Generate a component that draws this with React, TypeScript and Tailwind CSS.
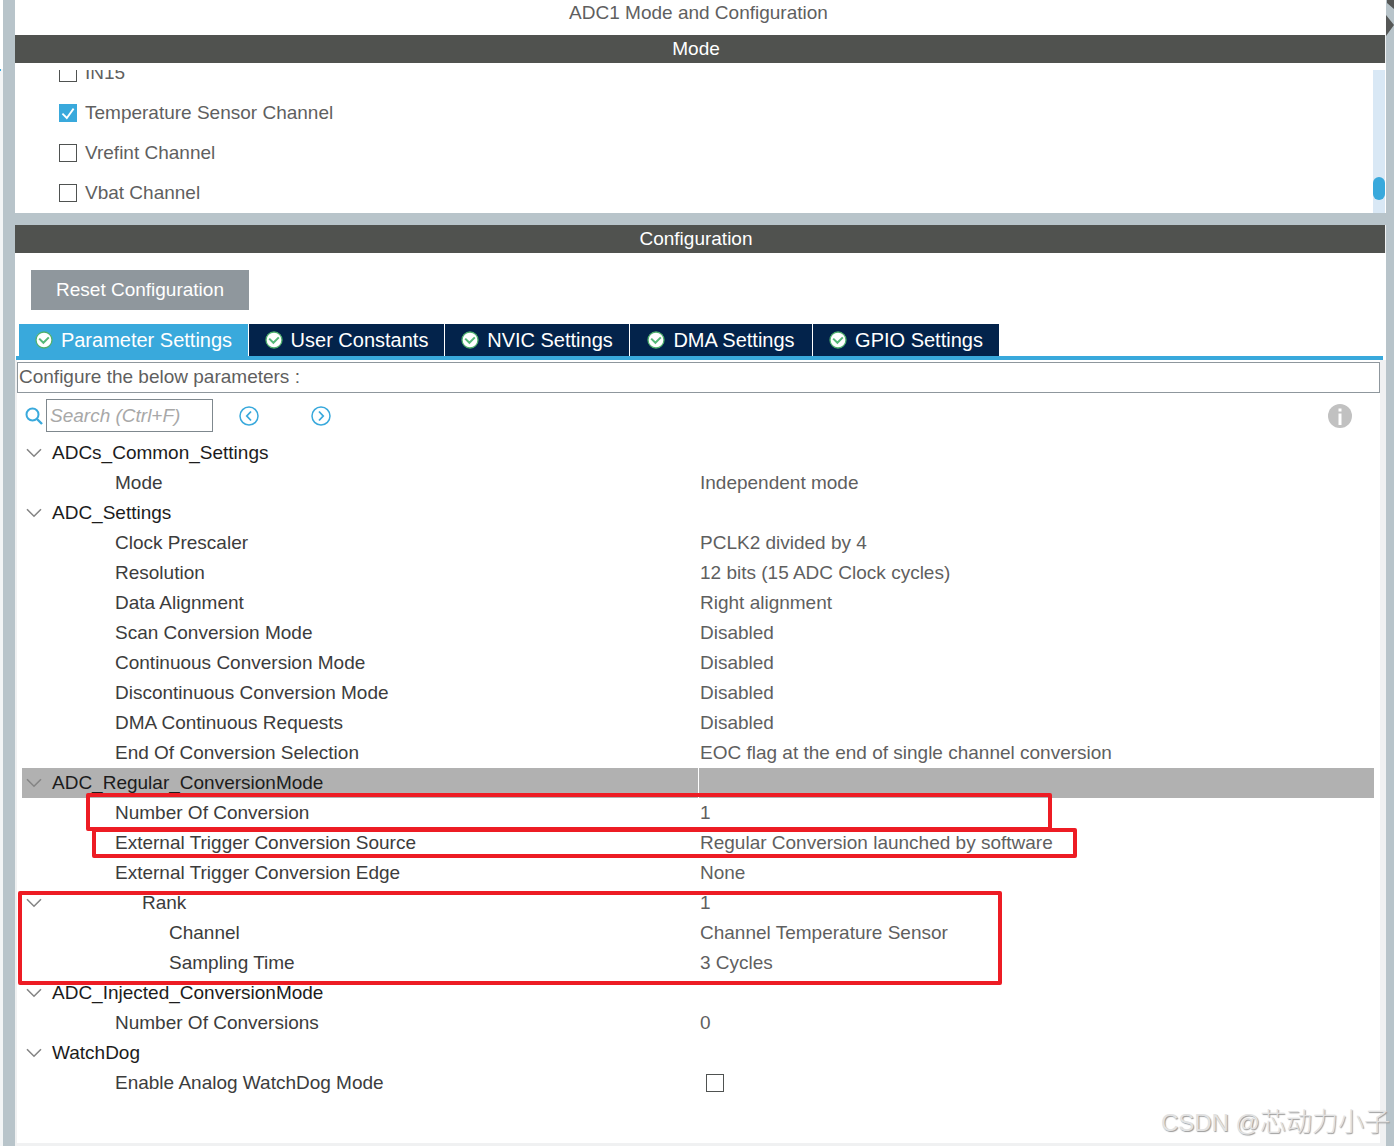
import { useState } from 'react';
import clsx from 'clsx';

interface Row {
  id: string;
  label: string;
  value?: string;
  kind: 'group' | 'param' | 'rank' | 'sub' | 'check';
}

const channels = ['IN15', 'Temperature Sensor Channel', 'Vrefint Channel', 'Vbat Channel'];

const tabs = [
  { label: 'Parameter Settings', width: 'w-[229px]' },
  { label: 'User Constants', width: 'w-[195px]' },
  { label: 'NVIC Settings', width: 'w-[184px]' },
  { label: 'DMA Settings', width: 'w-[182px]' },
  { label: 'GPIO Settings', width: 'w-[186px]' },
];

const rows: Row[] = [
  { id: 'common', label: 'ADCs_Common_Settings', kind: 'group' },
  { id: 'mode', label: 'Mode', value: 'Independent mode', kind: 'param' },
  { id: 'settings', label: 'ADC_Settings', kind: 'group' },
  { id: 'prescaler', label: 'Clock Prescaler', value: 'PCLK2 divided by 4', kind: 'param' },
  { id: 'resolution', label: 'Resolution', value: '12 bits (15 ADC Clock cycles)', kind: 'param' },
  { id: 'align', label: 'Data Alignment', value: 'Right alignment', kind: 'param' },
  { id: 'scan', label: 'Scan Conversion Mode', value: 'Disabled', kind: 'param' },
  { id: 'continuous', label: 'Continuous Conversion Mode', value: 'Disabled', kind: 'param' },
  { id: 'discontinuous', label: 'Discontinuous Conversion Mode', value: 'Disabled', kind: 'param' },
  { id: 'dma', label: 'DMA Continuous Requests', value: 'Disabled', kind: 'param' },
  { id: 'eoc', label: 'End Of Conversion Selection', value: 'EOC flag at the end of single channel conversion', kind: 'param' },
  { id: 'regular', label: 'ADC_Regular_ConversionMode', kind: 'group' },
  { id: 'count', label: 'Number Of Conversion', value: '1', kind: 'param' },
  { id: 'source', label: 'External Trigger Conversion Source', value: 'Regular Conversion launched by software', kind: 'param' },
  { id: 'edge', label: 'External Trigger Conversion Edge', value: 'None', kind: 'param' },
  { id: 'rank', label: 'Rank', value: '1', kind: 'rank' },
  { id: 'channel', label: 'Channel', value: 'Channel Temperature Sensor', kind: 'sub' },
  { id: 'sampling', label: 'Sampling Time', value: '3 Cycles', kind: 'sub' },
  { id: 'injected', label: 'ADC_Injected_ConversionMode', kind: 'group' },
  { id: 'injectedCount', label: 'Number Of Conversions', value: '0', kind: 'param' },
  { id: 'watchdog', label: 'WatchDog', kind: 'group' },
  { id: 'analogWatchdog', label: 'Enable Analog WatchDog Mode', kind: 'check' },
];

const Checkbox = ({ id, checked, onChange }: { id: string; checked: boolean; onChange: () => void }) => (
  <span className="relative block h-[18px] w-[18px] shrink-0">
    <input
      id={id}
      type="checkbox"
      checked={checked}
      onChange={onChange}
      className="block h-[18px] w-[18px] appearance-none border border-[#4f5251] bg-white checked:border-[#39a9dc] checked:bg-[#39a9dc]"
    />
    {checked && (
      <svg viewBox="0 0 18 18" className="pointer-events-none absolute inset-0" fill="none" stroke="white" strokeWidth="1.8">
        <path d="M3.4 9.6 7.8 14 14.6 4.6" />
      </svg>
    )}
  </span>
);

const StatusIcon = () => (
  <svg viewBox="0 0 18 18" className="h-[18px] w-[18px] shrink-0" fill="none">
    <circle cx="9" cy="9" r="8" fill="white" stroke="#4fb06d" strokeWidth="1.3" />
    <path d="M4.2 7.6 8.4 11.8 13.8 6.4" stroke="#55b878" strokeWidth="2" />
  </svg>
);

const Chevron = () => (
  <svg viewBox="0 0 16 10" className="h-[10px] w-4" fill="none" stroke="#858585" strokeWidth="1.6">
    <path d="M1 1.2 8 8.2 15 1.2" />
  </svg>
);

const SectionBar = ({ title }: { title: string }) => (
  <h2 className="flex h-7 shrink-0 items-center justify-center border-r border-[#f0f1f2] bg-[#50524f] pr-2 text-white">
    {title}
  </h2>
);

export default function App() {
  const [enabled, setEnabled] = useState<string[]>(['Temperature Sensor Channel']);
  const [activeTab, setActiveTab] = useState('Parameter Settings');
  const [selected, setSelected] = useState('regular');
  const [analogWatchdog, setAnalogWatchdog] = useState(false);
  const [search, setSearch] = useState('');

  const toggleChannel = (name: string) => {
    setEnabled(prev => (prev.includes(name) ? prev.filter(n => n !== name) : [...prev, name]));
  };

  return (
    <div className="relative flex min-h-screen overflow-hidden bg-[#b8c4ca] font-['Liberation_Sans',Arial,sans-serif] text-[19px] leading-6 text-[#5f5f5f]">
      {/* Edge of the neighbouring panel */}
      <div className="w-[3px] shrink-0 bg-[#f3f5f6]">
        <div className="h-[69px] bg-white" />
        <div className="h-[2px] w-px bg-[#39a9dc]" />
      </div>

      <main className="ml-3 mr-2 flex min-w-0 flex-1 flex-col">
        <h1 className="h-[35px] shrink-0 bg-white pr-1 pt-px text-center">ADC1 Mode and Configuration</h1>

        <SectionBar title="Mode" />
        <section className="shrink-0 bg-white pt-[7px]">
          <div className="flex h-[143px] overflow-hidden">
            <div className="flex flex-1 flex-col justify-end pl-11">
              {channels.map(name => (
                <div key={name} className="flex h-10 shrink-0 items-center gap-2">
                  <Checkbox id={name} checked={enabled.includes(name)} onChange={() => toggleChannel(name)} />
                  <label htmlFor={name} className="pb-px">{name}</label>
                </div>
              ))}
            </div>
            <div className="flex w-3 flex-col justify-end bg-[#d9e8f5] pb-[13px]">
              <div className="h-[23px] rounded-full bg-[#39a9dc]" />
            </div>
            <div className="w-px bg-white" />
          </div>
        </section>

        <div className="h-3 shrink-0" />

        <SectionBar title="Configuration" />
        <section className="flex flex-1 flex-col bg-white pt-[17px]">
          <button className="ml-4 h-10 w-[218px] bg-[#8f979d] text-white">Reset Configuration</button>

          <div role="tablist" className="mt-[14px] ml-px mr-[3px] flex gap-px border-b-4 border-[#39a9dc] pl-[3px] text-[20px]">
            {tabs.map(({ label, width }) => (
              <button
                key={label}
                role="tab"
                aria-selected={label === activeTab}
                onClick={() => setActiveTab(label)}
                className={clsx(
                  'flex h-8 items-center justify-center gap-2 whitespace-nowrap text-white',
                  width,
                  label === activeTab ? 'bg-[#39a9dc]' : 'bg-[#03234b]',
                )}
              >
                <StatusIcon />
                <span>{label}</span>
              </button>
            ))}
          </div>

          <div className="flex flex-1 flex-col border-x-2 border-b-[3px] border-[#f0f1f2] border-r-[6px] pt-[2px]">
            <p className="h-[31px] border border-[#8f979d] pt-[2px] pl-px">Configure the below parameters :</p>

            <div className="flex h-[45px] items-center pr-7 pl-2">
              <label htmlFor="search" aria-label="Search">
                <svg viewBox="0 0 18 18" className="h-[18px] w-[18px]" fill="none" stroke="#39a9dc" strokeWidth="2">
                  <circle cx="7.5" cy="7.5" r="6" />
                  <path d="M12 12 17 17" strokeWidth="2.4" />
                </svg>
              </label>
              <input
                id="search"
                value={search}
                onChange={e => setSearch(e.target.value)}
                placeholder="Search (Ctrl+F)"
                className="ml-[3px] h-[33px] w-[167px] border border-[#7f888e] px-[3px] italic outline-none placeholder:text-[#a8a8a8]"
              />
              <button aria-label="Previous" className="ml-[26px]">
                <svg viewBox="0 0 20 20" className="h-5 w-5" fill="none" stroke="#39a9dc" strokeWidth="1.5">
                  <circle cx="10" cy="10" r="9" />
                  <path d="M12 5.5 7.8 10 12 14.5" strokeWidth="1.8" />
                </svg>
              </button>
              <button aria-label="Next" className="ml-[52px]">
                <svg viewBox="0 0 20 20" className="h-5 w-5" fill="none" stroke="#39a9dc" strokeWidth="1.5">
                  <circle cx="10" cy="10" r="9" />
                  <path d="M8 5.5 12.2 10 8 14.5" strokeWidth="1.8" />
                </svg>
              </button>
              <button aria-label="Information" className="ml-auto">
                <svg viewBox="0 0 24 24" className="h-6 w-6">
                  <circle cx="12" cy="12" r="12" fill="#c1c1c1" />
                  <path d="M10.5 4.5h3v3h-3zM10.5 9.5h3v11.5h-3z" fill="white" />
                </svg>
              </button>
            </div>

            <div className="relative mr-[6px] ml-[5px]">
              <table className="w-full table-fixed border-collapse text-left">
                <tbody>
                  {rows.map(row => (
                    <tr
                      key={row.id}
                      onClick={() => setSelected(row.id)}
                      className={clsx('h-[30px]', selected === row.id && 'bg-[#b1b1b1]')}
                    >
                      <th
                        scope="row"
                        className={clsx(
                          'w-1/2 p-0 pb-px font-normal',
                          row.kind === 'group' ? 'text-[#1c1c1c]' : 'text-[#3c3c3c]',
                          selected === row.id && 'border-r border-white',
                        )}
                      >
                        <div className="flex items-center">
                          <span className="w-[30px] shrink-0 pl-1">
                            {(row.kind === 'group' || row.kind === 'rank') && <Chevron />}
                          </span>
                          <span
                            className={clsx(
                              (row.kind === 'param' || row.kind === 'check') && 'pl-[63px]',
                              row.kind === 'rank' && 'pl-[90px]',
                              row.kind === 'sub' && 'pl-[117px]',
                            )}
                          >
                            {row.kind === 'check' ? <label htmlFor={row.id}>{row.label}</label> : row.label}
                          </span>
                        </div>
                      </th>
                      <td className="p-0 pb-px pl-[2px]">
                        {row.kind === 'check' ? (
                          <div className="pl-[6px]">
                            <Checkbox
                              id={row.id}
                              checked={analogWatchdog}
                              onChange={() => setAnalogWatchdog(prev => !prev)}
                            />
                          </div>
                        ) : (
                          row.value
                        )}
                      </td>
                    </tr>
                  ))}
                </tbody>
              </table>

              {/* Highlight frames */}
              <div className="pointer-events-none absolute top-[355px] left-16 h-[38px] w-[966px] rounded-xs border-4 border-[#ed1c24]" />
              <div className="pointer-events-none absolute top-[390px] left-[70px] h-[30px] w-[985px] rounded-xs border-4 border-[#ed1c24]" />
              <div className="pointer-events-none absolute top-[453px] -left-1 h-[94px] w-[984px] rounded-xs border-4 border-[#ed1c24]" />
            </div>
          </div>
        </section>
      </main>

      {/* Splitter arrows */}
      <svg viewBox="0 0 8 36" className="absolute top-0 right-0 h-9 w-2" fill="#555756">
        <path d="M1 0H8V9L1 3ZM0 15 8 25 0 36Z" />
      </svg>

      <div className="pointer-events-none absolute right-1 bottom-1 text-[24px] leading-[38px] text-[#e2e2e2] [text-shadow:1px_1px_1px_#999999]">
        CSDN @<span className="font-['Noto_Sans_CJK_SC',sans-serif] text-[26px] font-light">芯动力小子</span>
      </div>
    </div>
  );
}
